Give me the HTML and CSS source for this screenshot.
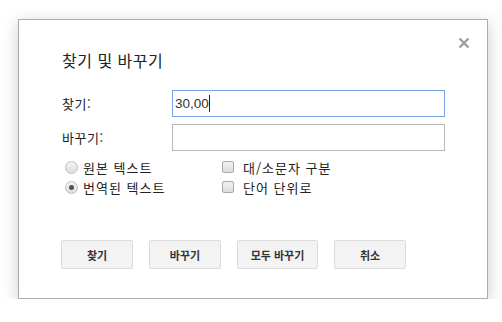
FILE: index.html
```html
<!DOCTYPE html>
<html lang="ko">
<head>
<meta charset="utf-8">
<link rel="stylesheet" href="styles.css">
</head>
<body>
<div class="dialog">
  <svg class="close" width="12" height="12" viewBox="0 0 12 12"><path d="M1.5 1.5L10.5 10.5M10.5 1.5L1.5 10.5" stroke="#9a9a9a" stroke-width="2.2" fill="none"/></svg>
  <div class="title">찾기 및 바꾸기</div>
  <div class="row">
    <label class="lbl">찾기:</label>
    <div class="input focus"><span class="val">30,00</span><span class="caret"></span></div>
  </div>
  <div class="row row2">
    <label class="lbl">바꾸기:</label>
    <div class="input"></div>
  </div>
  <div class="opts">
    <div class="col">
      <div class="opt"><span class="radio"></span>원본 텍스트</div>
      <div class="opt"><span class="radio on"></span>번역된 텍스트</div>
    </div>
    <div class="col col2">
      <div class="opt"><span class="check"></span>대/소문자 구분</div>
      <div class="opt"><span class="check"></span>단어 단위로</div>
    </div>
  </div>
  <div class="buttons">
    <div class="btn">찾기</div>
    <div class="btn">바꾸기</div>
    <div class="btn wide">모두 바꾸기</div>
    <div class="btn">취소</div>
  </div>
</div>
</body>
</html>
```
FILE: styles.css
```css
html, body { margin: 0; padding: 0; background: #fff; }
body {
  font-family: "Liberation Sans", Arial, "Noto Sans CJK KR", sans-serif;
  color: #222;
  padding: 19px 0 0 18px;
}
.dialog {
  position: relative;
  box-sizing: border-box;
  width: 470px;
  height: 280px;
  border: 1px solid #acacac;
  background: #fff;
  box-shadow: 0 4px 16px rgba(0,0,0,0.2);
  padding: 30px 0 0 43px;
}
.close { position: absolute; right: 17px; top: 17px; }
.title {
  font-family: "Noto Sans CJK KR", sans-serif;
  font-size: 16px;
  letter-spacing: 0.5px;
  line-height: 20px;
  color: #222;
  margin-bottom: 20px;
}
.row { display: flex; align-items: center; height: 27px; }
.row2 { margin-top: 7px; }
.lbl {
  width: 110px;
  font-family: "Noto Sans CJK KR", sans-serif;
  font-size: 13px;
  letter-spacing: 0.5px;
  color: #222;
}
.input {
  box-sizing: border-box;
  width: 273px;
  height: 27px;
  border: 1px solid #b8b8b8;
  display: flex;
  align-items: center;
  padding-left: 2px;
}
.input.focus { border-color: #7b9fe3; }
.val { font-size: 13.5px; color: #333; }
.caret { width: 1px; height: 17px; background: #222; }
.opts { display: flex; margin-top: 6px; margin-left: 3px; }
.col { width: 157px; }
.opt {
  display: flex;
  align-items: center;
  height: 20px;
  font-family: "Noto Sans CJK KR", sans-serif;
  font-size: 13px;
  letter-spacing: 1px;
  color: #222;
}
.radio {
  box-sizing: border-box;
  width: 13px;
  height: 13px;
  border-radius: 50%;
  border: 1px solid #bdbdbd;
  background: linear-gradient(#f4f4f4, #dedede);
  margin-right: 5px;
  display: flex;
  align-items: center;
  justify-content: center;
}
.radio.on::after {
  content: "";
  width: 5px;
  height: 5px;
  border-radius: 50%;
  background: #555;
}
.check {
  box-sizing: border-box;
  width: 12px;
  height: 12px;
  border-radius: 2px;
  border: 1px solid #a9a9a9;
  background: linear-gradient(#f2f2f2, #dcdcdc);
  margin-right: 9px;
}
.buttons { display: flex; gap: 16px; margin-top: 43px; margin-left: -1px; }
.btn {
  box-sizing: border-box;
  width: 72px;
  height: 29px;
  border: 1px solid #dcdcdc;
  border-radius: 2px;
  background: #f3f3f3;
  font-family: "Noto Sans CJK KR", sans-serif;
  font-weight: bold;
  font-size: 11px;
  color: #333;
  display: flex;
  align-items: center;
  justify-content: center;
}
.btn.wide { width: 81px; }
```
